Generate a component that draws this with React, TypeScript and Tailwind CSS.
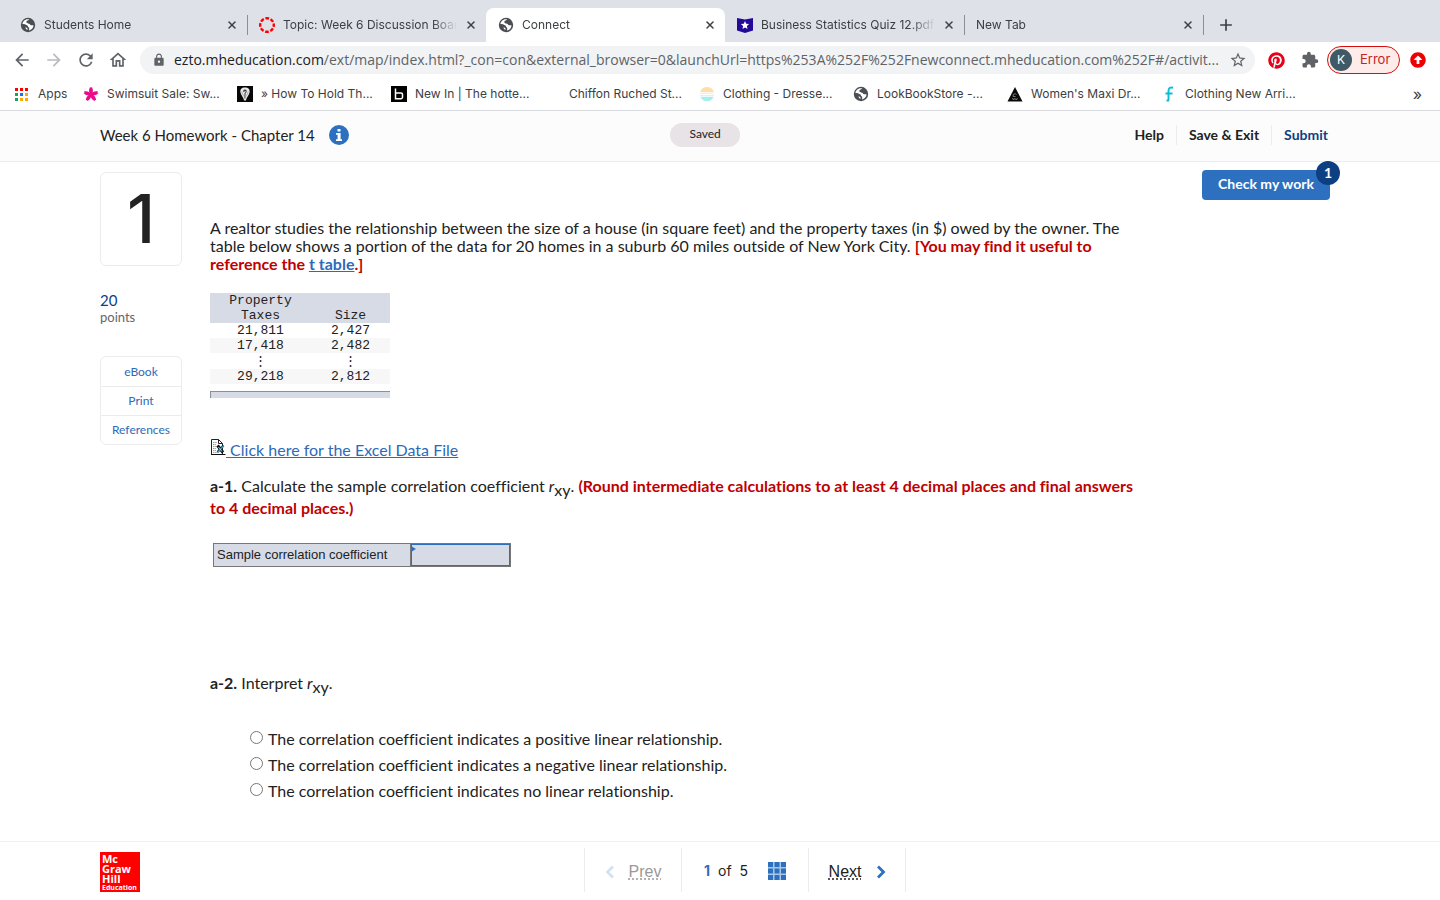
import { LuX } from "react-icons/lu";
import {
  MdArrowBack,
  MdArrowForward,
  MdRefresh,
  MdLock,
  MdStarBorder,
  MdExtension,
  MdAdd,
  MdOutlineHome,
} from "react-icons/md";
import { FaPinterest, FaArrowAltCircleUp } from "react-icons/fa";

const GlobeIcon = () => (
  <svg viewBox="0 0 16 16" className="size-4 shrink-0">
    <circle cx="8" cy="8" r="7.2" fill="#4b4e54" />
    <path
      d="M9.200 2.600c-.6 1-2.300.8-2.800 2-.3.9.5 1.700 1.700 1.800 1.300.1 2 .7 2.200 1.500.9.4 2.300 0 3.300.6-.3 2.600-2.200 4.500-4.600 5 .3-.9 0-1.500.3-2.200-.1-.9-1.300-1-1.400-2.100-.2-1.200-1.600-1.300-2.600-1.500-1.100-.2-2.200-.1-2.900-.6.2-2.200 1.700-3.900 3.700-4.600 1-.3 2.100-.3 3.100.1z"
      fill="#fff"
    />
    <path d="M2.500 6.900c1 .3 2 .2 2.900.5 1 .4 1.100 1.300 1.600 2.100.4.7 0 1.700.6 2.400.2.600 0 1.200-.2 1.700-2.800-.3-4.900-2.600-5.100-5.500z" fill="#4b4e54" />
    <path d="M5.500 10.200l1.800.9.3 1.900c-1.200-.5-2-1.500-2.100-2.800z" fill="#fff" />
  </svg>
);

const CanvasIcon = () => (
  <svg viewBox="0 0 16 16" className="size-4 shrink-0">
    <circle cx="8" cy="8" r="6.8" fill="none" stroke="#f00" strokeWidth="2.400" strokeDasharray="3.700 1.640" strokeDashoffset="1.850" />
  </svg>
);

const QuizIcon = () => (
  <svg viewBox="0 0 16 16" className="size-4 shrink-0">
    <path d="M0 1l8 1.500L16 1v12.500L8 16l-8-2.500z" fill="#250a99" />
    <path d="M8 4l1.200 2.700 2.900.3-2.200 2 .6 2.900L8 10.400l-2.500 1.500.6-2.900-2.200-2 2.900-.3z" fill="#fff" />
  </svg>
);

const AppsIcon = () => {
  const colors = ["#f00", "#f00", "#f00", "#18a35b", "#1a73e8", "#fbab00", "#18a35b", "#fbab00", "#fbab00"];
  return (
    <svg viewBox="0 0 13 13" className="mr-0.5 size-[13px] shrink-0">
      {colors.map((c, i) => (
        <rect key={i} x={(i % 3) * 5} y={Math.floor(i / 3) * 5} width="3" height="3" fill={c} />
      ))}
    </svg>
  );
};

const FlowerIcon = () => (
  <svg viewBox="0 0 16 16" className="size-4 shrink-0" fill="#ec0a8c">
    {[0, 72, 144, 216, 288].map((a) => (
      <path key={a} d="M8 9C5.900 7.200 5.400 3.700 7.200.9l.8.9.8-.9C10.600 3.700 10.100 7.200 8 9z" transform={`rotate(${a} 8 8.500)`} />
    ))}
  </svg>
);

const TieIcon = () => (
  <svg viewBox="0 0 16 16" className="size-4 shrink-0">
    <path d="M0 0h16v16H0z" fill="#080808" />
    <path d="M8 1.500c3.400 0 5 2 4.600 4.700C12.200 9.300 9.500 11 8.900 14.500H7.100C6.500 11 3.800 9.300 3.400 6.200 3 3.500 4.600 1.500 8 1.500z" fill="#e9e9e9" />
    <path d="M6.400 4.200c1-1 2.700-.8 3.200.4.4 1.200-.5 2.200-1.200 3.100v4.800h-.9V7.300C8.300 6.500 9 5.700 8.500 5c-.4-.5-1.100-.2-1 .4.1.7-1 .9-1.300.2z" fill="#333" />
    <path d="M4.800 5.500c.2 2 1.500 3.600 2.400 5M11.200 5.500c-.2 2-1.500 3.600-2.400 5" stroke="#888" strokeWidth=".6" fill="none" />
  </svg>
);

const BoohooIcon = () => (
  <svg viewBox="0 0 16 16" className="size-4 shrink-0">
    <path d="M0 0h16v16H0z" fill="#000" />
    <path d="M4.500 2.500v10.200h5.500a1.500 1.500 0 0 0 1.500-1.500V8.500A1.500 1.500 0 0 0 10 7H4.500" stroke="#fff" strokeWidth="1.500" fill="none" />
  </svg>
);

const SunsetIcon = () => (
  <svg viewBox="0 0 16 16" className="size-4 shrink-0">
    <path d="M1.200 6a7.100 7.100 0 0 1 13.600 0z" fill="#fddfae" />
    <path d="M1 6.500h14V8H1z" fill="#fdf0d9" />
    <path d="M1 9h14l-.3 1.500H1.300z" fill="#d5f6f5" />
    <path d="M1.500 11h13a7.100 7.100 0 0 1-13 0z" fill="#a5eef0" />
  </svg>
);

const TriangleIcon = () => (
  <svg viewBox="0 0 16 16" className="size-4 shrink-0">
    <path d="M8 1l7.500 14.500H.5z" fill="#0a0a0a" />
    <path d="M6.200 8.500c1-.9 2.300-.9 3.300 0M6.200 8.500v2h2.300M5.500 12l1 2 1.400-1.800L9.300 14l1.200-2" stroke="#999" strokeWidth=".8" fill="none" />
  </svg>
);

const SwirlIcon = () => (
  <svg viewBox="0 0 16 16" className="size-4 shrink-0">
    <path d="M12 1.700C9 1 7.500 2.400 7.500 5v9.500M5.500 14.500h2.500M4.500 7.500h7" stroke="#0bbcd6" strokeWidth="1.900" fill="none" />
  </svg>
);

const InfoIcon = () => (
  <svg viewBox="0 0 20 20" className="size-5 shrink-0">
    <circle cx="10" cy="10" r="10" fill="#2d70bf" />
    <path d="M8.500 4h3v2.600h-3zM7 8h4.600v6.200H13V16H7v-1.800h1.600V9.800H7z" fill="#fff" />
  </svg>
);

const ExcelIcon = () => (
  <svg viewBox="0 0 16 17" className="inline-block h-[17px] w-4 align-baseline">
    <path d="M1.500.5h7l4 4v11h-11z" fill="#fff" stroke="#222" />
    <path d="M8.500.5v4h4" fill="none" stroke="#222" />
    <path d="M3 3.500h4M3 5.500h3M3 7.500h3M3 9.500h3M3 11.500h3M3 13.500h5" stroke="#999" strokeDasharray="1.500 .7" />
    <path d="M7.500 6.500l5.500 7" stroke="#111" strokeWidth="3" />
    <path d="M13.500 6.500l-6 6.500" stroke="#111" strokeWidth="2" />
    <path d="M13.500 7l-5.500 6" stroke="#2ba5e0" strokeWidth="1.400" />
    <path d="M8.500 8l3.500 4.500" stroke="#ddd" strokeWidth=".9" />
    <path d="M1 15.500h14.500" stroke="#111" />
  </svg>
);

const TABS = [
  { title: "Students Home", icon: <GlobeIcon /> },
  { title: "Topic: Week 6 Discussion Board", icon: <CanvasIcon />, divider: true },
  { title: "Connect", icon: <GlobeIcon />, active: true },
  { title: "Business Statistics Quiz 12.pdf", icon: <QuizIcon /> },
  { title: "New Tab", divider: true },
];

const BOOKMARKS = [
  { label: "Apps", icon: <AppsIcon />, width: "w-[68px]" },
  { label: "Swimsuit Sale: Sw...", icon: <FlowerIcon />, width: "w-[154px]" },
  { label: "» How To Hold Th...", icon: <TieIcon />, width: "w-[154px]" },
  { label: "New In | The hotte...", icon: <BoohooIcon />, width: "w-[154px]" },
  { label: "Chiffon Ruched St...", icon: <span className="size-4" />, width: "w-[154px]" },
  { label: "Clothing - Dresse...", icon: <SunsetIcon />, width: "w-[154px]" },
  { label: "LookBookStore -...", icon: <GlobeIcon />, width: "w-[154px]" },
  { label: "Women's Maxi Dr...", icon: <TriangleIcon />, width: "w-[154px]" },
  { label: "Clothing New Arri...", icon: <SwirlIcon />, width: "w-[154px]" },
];

const CHOICES = [
  "The correlation coefficient indicates a positive linear relationship.",
  "The correlation coefficient indicates a negative linear relationship.",
  "The correlation coefficient indicates no linear relationship.",
];

function BrowserChrome() {
  return (
    <div className="font-[Inter,sans-serif] text-[#3c4043]">
      {/* tab strip */}
      <div className="flex h-[42px] items-end bg-[#dee1e8] pl-2 text-xs">
        {TABS.map((tab) => (
          <div
            key={tab.title}
            className={`relative flex h-[34px] w-[239px] items-center gap-2 pr-[9px] pl-3 ${tab.active ? "rounded-t-lg bg-white" : ""}`}
          >
            {tab.divider && <span className="absolute left-0 h-5 w-px bg-[#8b8e94]" />}
            {tab.icon}
            <span className="min-w-0 flex-1 overflow-hidden whitespace-nowrap [mask-image:linear-gradient(to_right,#000_calc(100%-24px),transparent)]">
              {tab.title}
            </span>
            <button aria-label="Close tab">
              <LuX className="size-3" strokeWidth={3} />
            </button>
          </div>
        ))}
        <span className="mb-[7px] h-5 w-px bg-[#8b8e94]" />
        <button aria-label="New tab" className="flex h-[34px] items-center pl-3">
          <MdAdd className="size-5" />
        </button>
      </div>

      {/* toolbar */}
      <div className="flex h-9 items-center bg-white pr-3.5 pl-3 text-[#5f6368]">
        <div className="flex w-32 items-center gap-3">
          <button aria-label="Back"><MdArrowBack className="size-5" /></button>
          <button aria-label="Forward"><MdArrowForward className="size-5 text-[#b9bbbe]" /></button>
          <button aria-label="Reload"><MdRefresh className="size-5" /></button>
          <button aria-label="Home"><MdOutlineHome className="size-5" /></button>
        </div>
        <div className="flex h-7 min-w-0 flex-1 items-center rounded-full bg-[#f1f3f4] pr-2 pl-3">
          <MdLock className="mr-2 size-3.5 shrink-0" />
          <span className="min-w-0 flex-1 overflow-hidden font-['Open_Sans',sans-serif] text-sm whitespace-nowrap">
            <span className="text-[#202124]">ezto.mheducation.com</span>
            /ext/map/index.html?_con=con&amp;external_browser=0&amp;launchUrl=https%253A%252F%252Fnewconnect.mheducation.com%252F#/activit...
          </span>
          <button aria-label="Bookmark"><MdStarBorder className="size-[18px]" /></button>
        </div>
        <div className="flex shrink-0 items-center pl-3">
          <FaPinterest className="mr-4 ml-px size-[17px] text-[#e60019]" />
          <MdExtension className="mr-2 size-[18px]" />
          <button className="flex h-7 w-[73px] items-center gap-2 rounded-full border border-[#d40f0f] bg-[#fdecea] pl-0.5 text-[13px] text-[#c5221f]">
            <span className="flex size-[22px] items-center justify-center rounded-full bg-[#3f5a66] text-xs text-white">K</span>
            Error
          </button>
          <FaArrowAltCircleUp className="ml-2.5 size-4 text-[#e00]" />
        </div>
      </div>

      {/* bookmarks */}
      <div className="flex h-[33px] items-center border-b border-[#d9dade] bg-white pr-[18px] pl-[15px] text-xs">
        {BOOKMARKS.map((b) => (
          <a key={b.label} href="#" className={`flex shrink-0 items-center gap-2 whitespace-nowrap ${b.width}`}>
            {b.icon}
            {b.label}
          </a>
        ))}
        <button aria-label="More bookmarks" className="ml-auto text-base leading-4">»</button>
      </div>
    </div>
  );
}

function AssignmentHeader() {
  return (
    <header className="grid h-[51px] grid-cols-[minmax(0,29fr)_auto_minmax(0,30fr)] items-center border-b border-[#ececec] bg-[#fcfcfc] pr-[110px] pb-0.5 pl-[100px]">
      <h1 className="flex items-center gap-3.5 text-[15px]">
        Week 6 Homework - Chapter 14
        <InfoIcon />
      </h1>
      <span className="flex h-6 w-[70px] items-center justify-center rounded-full bg-[#e7e3e7] pb-0.5 text-xs">Saved</span>
      <nav className="flex items-center justify-end pr-0.5 text-sm font-bold">
        <button className="h-5 px-3">Help</button>
        <button className="h-5 border-l border-[#ececec] px-3">Save &amp; Exit</button>
        <button className="h-5 border-l border-[#ececec] pl-3 text-[#0c4083]">Submit</button>
      </nav>
    </header>
  );
}

function QuestionRail() {
  return (
    <aside className="w-[82px] shrink-0 pt-0.5">
      <div className="flex h-[94px] items-center justify-center rounded-md border border-[#ececec] pb-0.5 font-[Inter,sans-serif] text-[68px] leading-none font-medium">
        1
      </div>
      <p className="mt-[25px] text-[15px] leading-[18px] text-[#0c4083]">20</p>
      <p className="text-[13px] leading-4 text-[#666]">points</p>
      <div className="mt-[31px] divide-y divide-[#ececec] rounded-md border border-[#ececec] text-xs text-[#2d6ab8]">
        <a href="#" className="flex h-[30px] items-center justify-center">eBook</a>
        <a href="#" className="flex h-[29px] items-center justify-center">Print</a>
        <a href="#" className="flex h-7 items-center justify-center">References</a>
      </div>
    </aside>
  );
}

function DataTable() {
  return (
    <table className="mt-5 w-[180px] table-fixed text-center font-['Liberation_Mono',monospace] text-[13px] leading-[15px]">
      <thead className="bg-[#d7dbe6]">
        <tr className="align-bottom">
          <th className="w-[101px] font-normal">Property<br />Taxes</th>
          <th className="font-normal">Size</th>
        </tr>
      </thead>
      <tbody>
        <tr><td>21,811</td><td>2,427</td></tr>
        <tr className="bg-[#f7f7f7]"><td>17,418</td><td>2,482</td></tr>
        <tr className="h-4"><td>⋮</td><td>⋮</td></tr>
        <tr className="bg-[#f7f7f7]"><td>29,218</td><td>2,812</td></tr>
      </tbody>
    </table>
  );
}

const Rxy = () => (
  <>
    <i>r</i>
    <sub className="static align-[-4px] text-base leading-[14px]">xy</sub>
  </>
);

function Question() {
  return (
    <section className="ml-7 min-w-0 flex-1">
      <div className="flex justify-end">
        <button className="relative h-[30px] w-32 rounded-sm bg-[#2d70bf] pb-0.5 text-sm font-bold text-white">
          Check my work
          <span className="absolute -top-[9px] -right-2.5 flex size-6 items-center justify-center rounded-full bg-[#0c4083]">1</span>
        </button>
      </div>
      <div className="mt-[19px] max-w-[940px] leading-[18px]">
        <p>
          A realtor studies the relationship between the size of a house (in square feet) and the property taxes (in $) owed by the owner. The
          table below shows a portion of the data for 20 homes in a suburb 60 miles outside of New York City.{" "}
          <b className="text-[#c00000]">
            [You may find it useful to reference the <a href="#" className="text-[#2d6ab8] underline">t table</a>.]
          </b>
        </p>
        <DataTable />
        <div className="mt-[7px] h-[7px] w-[180px] border-t border-l border-[#8b8f99] bg-[#d7dbe6]" />
        <p className="mt-[41px]">
          <ExcelIcon />
          <a href="#" className="text-[#2d6ab8] underline">&nbsp;Click here for the Excel Data File</a>
        </p>
        <p className="mt-4 leading-[22px]">
          <b>a-1.</b> Calculate the sample correlation coefficient <Rxy />.{" "}
          <b className="text-[#c00000]">(Round intermediate calculations to at least 4 decimal places and final answers to 4 decimal places.)</b>
        </p>
        <div className="mt-6 ml-[3px] flex h-6 w-[298px] border border-[#777] bg-[#d7dbe6] font-['Liberation_Sans',sans-serif] text-[13px]">
          <label htmlFor="coefficient" className="flex w-[197px] items-center border-r border-[#777] pl-[3px]">
            Sample correlation coefficient
          </label>
          <div className="relative min-w-0 flex-1">
            <input id="coefficient" className="block h-full w-full border border-[#2d70bf] px-1 outline-none" />
            <svg viewBox="0 0 5 6" className="absolute top-0.5 left-0 h-1.5 w-[5px]">
              <path d="M0 0l5 3-5 3z" fill="#2d70bf" />
            </svg>
          </div>
        </div>
        <p className="mt-[105px] leading-[22px]">
          <b>a-2.</b> Interpret <Rxy />.
        </p>
        <fieldset className="mt-8 ml-10">
          {CHOICES.map((choice) => (
            <label key={choice} className="flex h-[26px] items-center gap-[5px]">
              <input type="radio" name="interpretation" className="mb-1 size-[13px]" />
              {choice}
            </label>
          ))}
        </fieldset>
      </div>
    </section>
  );
}

function Footer() {
  return (
    <footer className="flex h-[59px] border-t border-[#f0f0f0] pt-1.5">
      <div className="w-[40.56%] pt-1 pl-[100px]">
        <div className="flex size-10 flex-col bg-[#f00] pt-0.5 pl-0.5 font-['Open_Sans',sans-serif] text-[11px] leading-[10px] font-bold text-white">
          <span>Mc</span>
          <span>Graw</span>
          <span>Hill</span>
          <span className="text-[7px] leading-[7px]">Education</span>
        </div>
      </div>
      <nav className="flex h-11 items-stretch divide-x divide-[#ececec] border-x border-[#ececec] font-['Liberation_Sans',sans-serif]">
        <button className="flex w-[97px] items-center justify-center gap-3.5 pt-1 text-[#999]">
          <svg viewBox="0 0 10 14" className="h-3.5 w-2.5"><path d="M8 1.500L2.500 7 8 12.500" stroke="#d3e2f3" strokeWidth="2.800" fill="none" /></svg>
          <span className="underline decoration-dotted underline-offset-2">Prev</span>
        </button>
        <div className="flex w-[127px] items-center justify-center pt-0.5 font-[Inter,sans-serif] text-sm">
          <b className="mr-2 text-[#2d70bf]">1</b> of <span className="mr-5 ml-2">5</span>
          <button aria-label="All questions">
            <svg viewBox="0 0 18 18" className="size-[18px]">
              <path d="M0 0h18v18H0z" fill="#a9c6e6" />
              {[0, 1, 2, 3, 4, 5, 6, 7, 8].map((i) => (
                <rect key={i} x={(i % 3) * 6.500} y={Math.floor(i / 3) * 6.500} width="5" height="5" fill="#2d70bf" />
              ))}
            </svg>
          </button>
        </div>
        <button className="flex w-24 items-center justify-center gap-3.5 pt-1">
          <span className="underline decoration-dotted underline-offset-2">Next</span>
          <svg viewBox="0 0 10 14" className="h-3.5 w-2.5"><path d="M2 1.500L7.500 7 2 12.500" stroke="#2d70bf" strokeWidth="2.800" fill="none" /></svg>
        </button>
      </nav>
    </footer>
  );
}

export default function App() {
  return (
    <div className="flex min-h-screen flex-col bg-white">
      <BrowserChrome />
      <div className="flex flex-1 flex-col font-[Lato,sans-serif] text-base text-[#222] [font-variant-ligatures:none]">
        <AssignmentHeader />
        <main className="flex flex-1 items-start pt-2 pr-[110px] pb-6 pl-[100px]">
          <QuestionRail />
          <Question />
        </main>
        <Footer />
      </div>
    </div>
  );
}
